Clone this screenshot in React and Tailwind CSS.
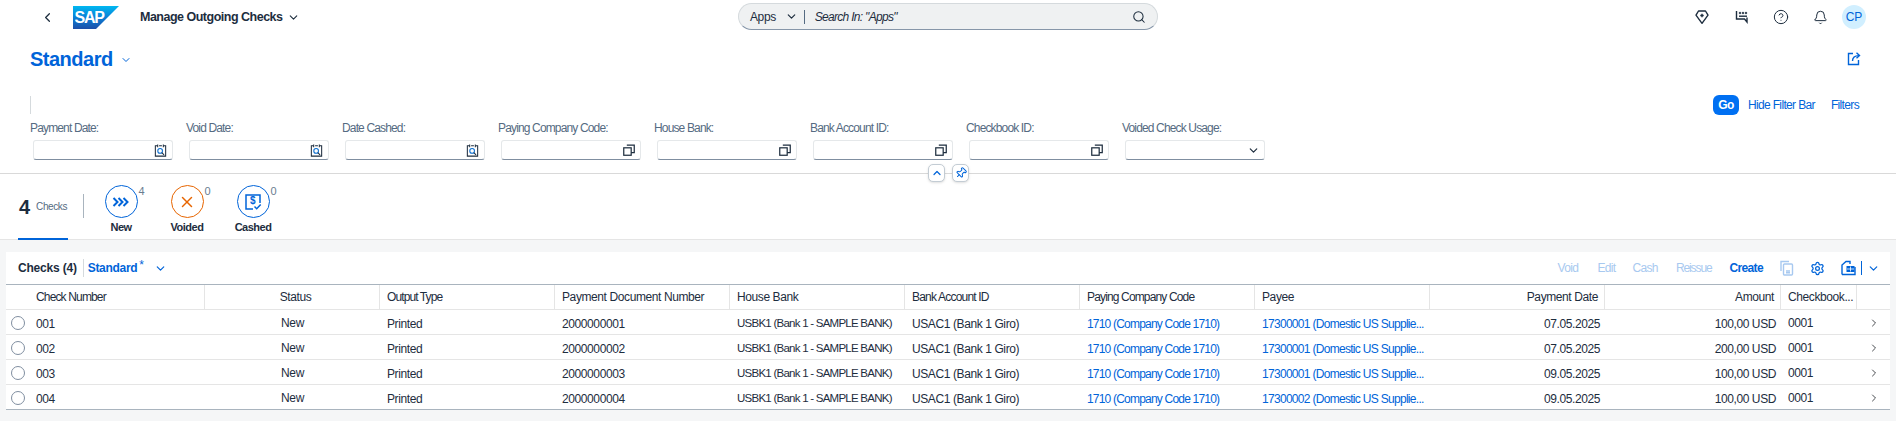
import React from "react";
import { Bell, ChevronDown, ChevronLeft, ChevronRight, ChevronUp, CircleHelp, Pin, Search, Settings, X } from "lucide-react";

const filters = [
  { label: "Payment Date:", icon: "date" },
  { label: "Void Date:", icon: "date" },
  { label: "Date Cashed:", icon: "date" },
  { label: "Paying Company Code:", icon: "help" },
  { label: "House Bank:", icon: "help" },
  { label: "Bank Account ID:", icon: "help" },
  { label: "Checkbook ID:", icon: "help" },
  { label: "Voided Check Usage:", icon: "select" },
];

const rows = [
  { no: "001", doc: "2000000001", payee: "17300001", date: "07.05.2025", amount: "100,00 USD" },
  { no: "002", doc: "2000000002", payee: "17300001", date: "07.05.2025", amount: "200,00 USD" },
  { no: "003", doc: "2000000003", payee: "17300001", date: "09.05.2025", amount: "100,00 USD" },
  { no: "004", doc: "2000000004", payee: "17300002", date: "09.05.2025", amount: "100,00 USD" },
];

const gridCols =
  "grid grid-cols-[199px_175px_175px_175px_175px_175px_175px_175px_175px_176px_76px_33px]";

const SapLogo = () => (
  <svg width="46" height="23" viewBox="0 0 46 23">
    <defs>
      <linearGradient id="sapGrad" x1="0" y1="0" x2="0" y2="1">
        <stop offset="0" stopColor="#00b8f1" />
        <stop offset="0.5" stopColor="#0a7fd6" />
        <stop offset="1" stopColor="#1d4fa8" />
      </linearGradient>
    </defs>
    <polygon points="0,0 46,0 23,23 0,23" fill="url(#sapGrad)" />
    <text x="1.5" y="17" fill="#fff" fontFamily="Liberation Sans" fontWeight="700" fontSize="16" letterSpacing="-1.2">
      SAP
    </text>
  </svg>
);

const WhatsNewIcon = () => (
  <svg width="16" height="16" viewBox="0 0 16 16" fill="none" stroke="#1d2d3e" strokeWidth="1.4">
    <path d="M4.5 2h7L14 6.2 8 14.3 2 6.2z" strokeLinejoin="round" />
    <path d="M8 4.8v3.4M6.3 6.5h3.4" />
  </svg>
);

const FeedbackIcon = () => (
  <svg width="16" height="16" viewBox="0 0 16 16" fill="none" stroke="#1d2d3e" strokeWidth="1.4">
    <path d="M2.5 2v8h8l2.5 3V8.5" />
    <path d="M5 7.2h8" />
    <circle cx="6" cy="4" r="0.9" fill="#1d2d3e" strokeWidth="0.5" />
    <circle cx="9" cy="4" r="0.9" fill="#1d2d3e" strokeWidth="0.5" />
    <circle cx="12" cy="4" r="0.9" fill="#1d2d3e" strokeWidth="0.5" />
  </svg>
);

const ShareIcon = () => (
  <svg width="16" height="16" viewBox="0 0 16 16" fill="none" stroke="#0064d9" strokeWidth="1.4">
    <path d="M7 2.5H2.5v11h10V9" />
    <path d="M6.5 10c0-3.6 2.2-5.4 6.5-5.4" />
    <path d="M10.5 1.8 13.5 4.6l-3 2.7" />
  </svg>
);

const DateIcon = () => (
  <svg width="15" height="15" viewBox="0 0 16 16" fill="none" stroke="#1d2d3e" strokeWidth="1.1">
    <path d="M5 3H2.5v11h11V3H11" />
    <path d="M5 1.5v3M11 1.5v3M6.5 3h3" />
    <circle cx="7.6" cy="8.4" r="2.5" stroke="#0a6ed1" />
    <path d="m9.4 10.2 2.4 2.4" />
  </svg>
);

const ValueHelpIcon = () => (
  <svg width="14" height="14" viewBox="0 0 16 16" fill="none" stroke="#1d2d3e" strokeWidth="1.4">
    <rect x="2" y="5.5" width="8.5" height="8.5" />
    <path d="M5.5 2.5H14V11h-3.5" />
  </svg>
);

const TripleChevron = () => (
  <svg width="18" height="12" viewBox="0 0 18 12" fill="none" stroke="#0064d9" strokeWidth="2">
    <path d="m1.5 2 4 4-4 4M6.5 2l4 4-4 4M11.5 2l4 4-4 4" />
  </svg>
);

const CashedIcon = () => (
  <svg width="20" height="20" viewBox="0 0 20 20" fill="none" stroke="#0064d9" strokeWidth="1.5">
    <path d="M3 13V3h14v8" />
    <path d="M3 13v4h7" />
    <text x="7" y="12" fill="#0064d9" stroke="none" fontFamily="Liberation Sans" fontWeight="700" fontSize="10">
      $
    </text>
    <path d="m11.5 14.5 2.2 2.2 4-4.2" />
  </svg>
);

const CopyDocIcon = () => (
  <svg width="16" height="16" viewBox="0 0 16 16" fill="none" stroke="#a8c9f0" strokeWidth="1.4">
    <path d="M2 11V1.5h8" />
    <rect x="4.5" y="4" width="9" height="11" rx="1" />
    <path d="M7 11h4M7 12.8h4" />
  </svg>
);

const ExportIcon = () => (
  <svg width="16" height="16" viewBox="0 0 16 16" fill="none" stroke="#0064d9" strokeWidth="1.4">
    <path d="M2 14.5V5l4-3.5h4V4" />
    <path d="M2 14.5h13V7" />
    <rect x="7" y="6.5" width="7" height="5" strokeWidth="1" fill="#0064d9" />
    <path d="M7 9h7M10.5 6.5v5" stroke="#fff" strokeWidth="0.8" />
  </svg>
);

const App = () => {
  return (
    <div className="w-[1896px] h-[421px] overflow-hidden bg-white whitespace-nowrap font-['Liberation_Sans',sans-serif] text-[12px] text-[#1d2d3e]">
      {/* SHELL BAR */}
      <div className="flex h-[34px] items-start">
        <div className="flex w-[738px] items-center pl-[40px] h-[34px]">
          <ChevronLeft size={15} strokeWidth={2} />
          <div className="ml-[18px] flex">
            <SapLogo />
          </div>
          <span className="ml-[21px] text-[12.5px] font-bold tracking-[-0.5px]">Manage Outgoing Checks</span>
          <ChevronDown size={13} strokeWidth={2} className="ml-[4px]" />
        </div>

        <div className="mt-[3px] flex h-[27px] w-[420px] items-center rounded-full border border-[#d5dadd] border-b-[#8696a9] bg-[#eff1f2] pl-[11px] pr-[11px]">
          <span className="tracking-[-0.4px]">Apps</span>
          <ChevronDown size={13} strokeWidth={2.2} className="ml-[9px]" />
          <div className="ml-[6px] h-[14px] w-px bg-[#556b82]"></div>
          <span className="ml-[10px] flex-1 italic tracking-[-0.7px]">Search In: "Apps"</span>
          <Search size={14} strokeWidth={1.8} />
        </div>

        <div className="flex h-[34px] flex-1 items-center pl-[536px]">
          <WhatsNewIcon />
          <div className="ml-[24px] flex"><FeedbackIcon /></div>
          <CircleHelp size={16} strokeWidth={1.5} className="ml-[23px]" />
          <Bell size={15} strokeWidth={1.6} className="ml-[24px]" />
          <div className="ml-[14px] flex h-[24px] w-[24px] items-center justify-center rounded-full bg-[#d1efff] text-[12px] text-[#0064d9]">
            CP
          </div>
        </div>
      </div>

      {/* TITLE */}
      <div className="flex h-[50px] items-center pl-[30px] pr-[34px]">
        <span className="text-[20px] font-bold tracking-[-0.5px] text-[#0064d9]">Standard</span>
        <ChevronDown size={12} strokeWidth={2} className="ml-[7px] mt-[2px] text-[#0064d9]" />
        <div className="ml-auto flex"><ShareIcon /></div>
      </div>

      {/* FILTER BAR */}
      <div className="relative h-[90px] border-b border-[#d9d9d9] pl-[30px]">
        <div className="flex h-[31px] items-start pt-[11px] pr-[37px]">
          <div className="mt-[1px] h-[18px] w-px bg-[#d5dadd]"></div>
          <div className="ml-auto flex h-[20px] items-center text-[#0064d9] tracking-[-0.65px]">
            <span className="flex h-[20px] w-[26px] items-center justify-center rounded-[6px] bg-[#0070f2] font-bold text-white">Go</span>
            <span className="ml-[9px]">Hide Filter Bar</span>
            <span className="ml-[16px]">Filters</span>
          </div>
        </div>

        <div className="mt-[6px] flex">
          {filters.map((f) => (
            <div key={f.label} className="w-[156px]">
              <div className="h-[14px] leading-[14px] text-[#556b82] tracking-[-0.85px]">{f.label}</div>
              <div className="ml-[3px] mt-[5px] flex h-[20px] w-[140px] items-center justify-end rounded-[3px] border border-[#e5e8ea] border-b-[#7f8ea0] bg-white pr-[4px]">
                {f.icon === "date" && <DateIcon />}
                {f.icon === "help" && <ValueHelpIcon />}
                {f.icon === "select" && <ChevronDown size={13} strokeWidth={2.2} />}
              </div>
            </div>
          ))}
        </div>

        {/* collapse + pin */}
        <div className="absolute bottom-[-9px] left-[928px] flex gap-[7px]">
          <div className="flex h-[18px] w-[17px] items-center justify-center rounded-[5px] border border-[#c3ccd4] bg-white shadow-sm">
            <ChevronUp size={12} strokeWidth={2.4} className="text-[#0064d9]" />
          </div>
          <div className="flex h-[18px] w-[17px] items-center justify-center rounded-[5px] border border-[#c3ccd4] bg-white shadow-sm">
            <Pin size={12} strokeWidth={2} className="rotate-45 text-[#0064d9]" />
          </div>
        </div>
      </div>

      {/* KPI TABS */}
      <div className="flex h-[66px] border-b border-[#e5e5e5] pl-[18px]">
        <div className="flex h-[66px] w-[50px] items-center justify-center border-b-2 border-[#0064d9] pt-[1px]">
          <span className="text-[20px] font-bold leading-none">4</span>
          <span className="ml-[6px] text-[10px] tracking-[-0.4px] text-[#556b82]">Checks</span>
        </div>
        <div className="ml-[15px] mt-[20px] h-[24px] w-px bg-[#a9b4be]"></div>
        <div className="ml-[4px] flex">
          <KpiTab label="New" count="4" ring="border-[#0064d9]">
            <TripleChevron />
          </KpiTab>
          <KpiTab label="Voided" count="0" ring="border-[#e76500]">
            <X size={18} strokeWidth={2} className="text-[#e76500]" />
          </KpiTab>
          <KpiTab label="Cashed" count="0" ring="border-[#0064d9]">
            <CashedIcon />
          </KpiTab>
        </div>
      </div>

      {/* TABLE PANEL */}
      <div className="h-[181px] bg-[#f5f6f7] px-[6px] pt-[12px]">
        <div className="bg-white">
          <div className="flex h-[32px] items-center pl-[12px]">
            <span className="font-bold tracking-[-0.2px]">Checks (4)</span>
            <div className="ml-[6px] h-[18px] w-px bg-[#d5dadd]"></div>
            <span className="ml-[4px] font-bold tracking-[-0.3px] text-[#0064d9]">Standard</span>
            <span className="mb-[6px] ml-[2px] text-[#0064d9]">*</span>
            <ChevronDown size={13} strokeWidth={2.2} className="ml-[10px] text-[#0064d9]" />

            <div className="ml-auto flex items-center pr-[10px] tracking-[-0.65px]">
              <span className="text-[#a8c9f0]">Void</span>
              <span className="ml-[19px] text-[#a8c9f0]">Edit</span>
              <span className="ml-[17px] text-[#a8c9f0]">Cash</span>
              <span className="ml-[18px] tracking-[-1.1px] text-[#a8c9f0]">Reissue</span>
              <span className="ml-[18px] font-bold text-[#0064d9]">Create</span>
              <div className="ml-[16px] flex"><CopyDocIcon /></div>
              <Settings size={15} strokeWidth={2} className="ml-[15px] text-[#0064d9]" />
              <div className="ml-[15px] flex"><ExportIcon /></div>
              <div className="ml-[5px] h-[14px] w-px bg-[#0064d9]"></div>
              <ChevronDown size={13} strokeWidth={2.2} className="ml-[5px] text-[#0064d9]" />
            </div>
          </div>

          {/* header */}
          <div className={`${gridCols} h-[26px] border-y border-t-[#a9b4be] border-b-[#e5e5e5] tracking-[-0.4px]`}>
            <HeadCell className="pl-[30px] tracking-[-0.85px]">Check Number</HeadCell>
            <HeadCell className="justify-center">Status</HeadCell>
            <HeadCell className="tracking-[-0.9px]">Output Type</HeadCell>
            <HeadCell>Payment Document Number</HeadCell>
            <HeadCell>House Bank</HeadCell>
            <HeadCell className="tracking-[-0.8px]">Bank Account ID</HeadCell>
            <HeadCell className="tracking-[-0.85px]">Paying Company Code</HeadCell>
            <HeadCell>Payee</HeadCell>
            <HeadCell className="justify-end pr-[6px]">Payment Date</HeadCell>
            <HeadCell className="justify-end pr-[6px]">Amount</HeadCell>
            <HeadCell>Checkbook...</HeadCell>
            <div></div>
          </div>

          {/* rows */}
          {rows.map((r, i) => (
            <div
              key={r.no}
              className={`${gridCols} h-[25px] items-center border-b pt-[4px] tracking-[-0.4px] ${i === rows.length - 1 ? "border-[#a9b4be]" : "border-[#e5e5e5]"}`}
            >
              <div className="flex items-center pl-[5px]">
                <span className="-mt-[2px] h-[14px] w-[14px] rounded-full border border-[#7f8ea0] bg-white"></span>
                <span className="ml-[11px]">{r.no}</span>
              </div>
              <div className="-mt-[2px] text-center">New</div>
              <div className="pl-[7px]">Printed</div>
              <div className="pl-[7px]">{r.doc}</div>
              <div className="pl-[7px] text-[11.5px] tracking-[-0.75px]">USBK1 (Bank 1 - SAMPLE BANK)</div>
              <div className="pl-[7px]">USAC1 (Bank 1 Giro)</div>
              <div className="pl-[7px] tracking-[-0.8px] text-[#0064d9]">1710 (Company Code 1710)</div>
              <div className="pl-[7px] tracking-[-0.7px] text-[#0064d9]">{r.payee} (Domestic US Supplie...</div>
              <div className="pr-[5px] text-right">{r.date}</div>
              <div className="pr-[5px] text-right">{r.amount}</div>
              <div className="-mt-[2px] pl-[7px]">0001</div>
              <div className="-mt-[2px] flex justify-center">
                <ChevronRight size={12} strokeWidth={1.8} className="text-[#32363a]" />
              </div>
            </div>
          ))}
        </div>
      </div>
    </div>
  );
};

const KpiTab = ({ label, count, ring, children }) => (
  <div className="flex w-[66px] flex-col items-center pt-[11px]">
    <div className={`relative flex h-[33px] w-[33px] items-center justify-center rounded-full border ${ring}`}>
      {children}
      <span className="absolute left-[33px] top-[-3px] text-[11px] text-[#6a7d90]">{count}</span>
    </div>
    <span className="mt-[1px] text-[11px] font-bold tracking-[-0.5px]">{label}</span>
  </div>
);

const HeadCell = ({ className = "", children }) => (
  <div className={`flex items-center border-r border-[#e5e5e5] pl-[7px] ${className}`}>{children}</div>
);

export default App;
